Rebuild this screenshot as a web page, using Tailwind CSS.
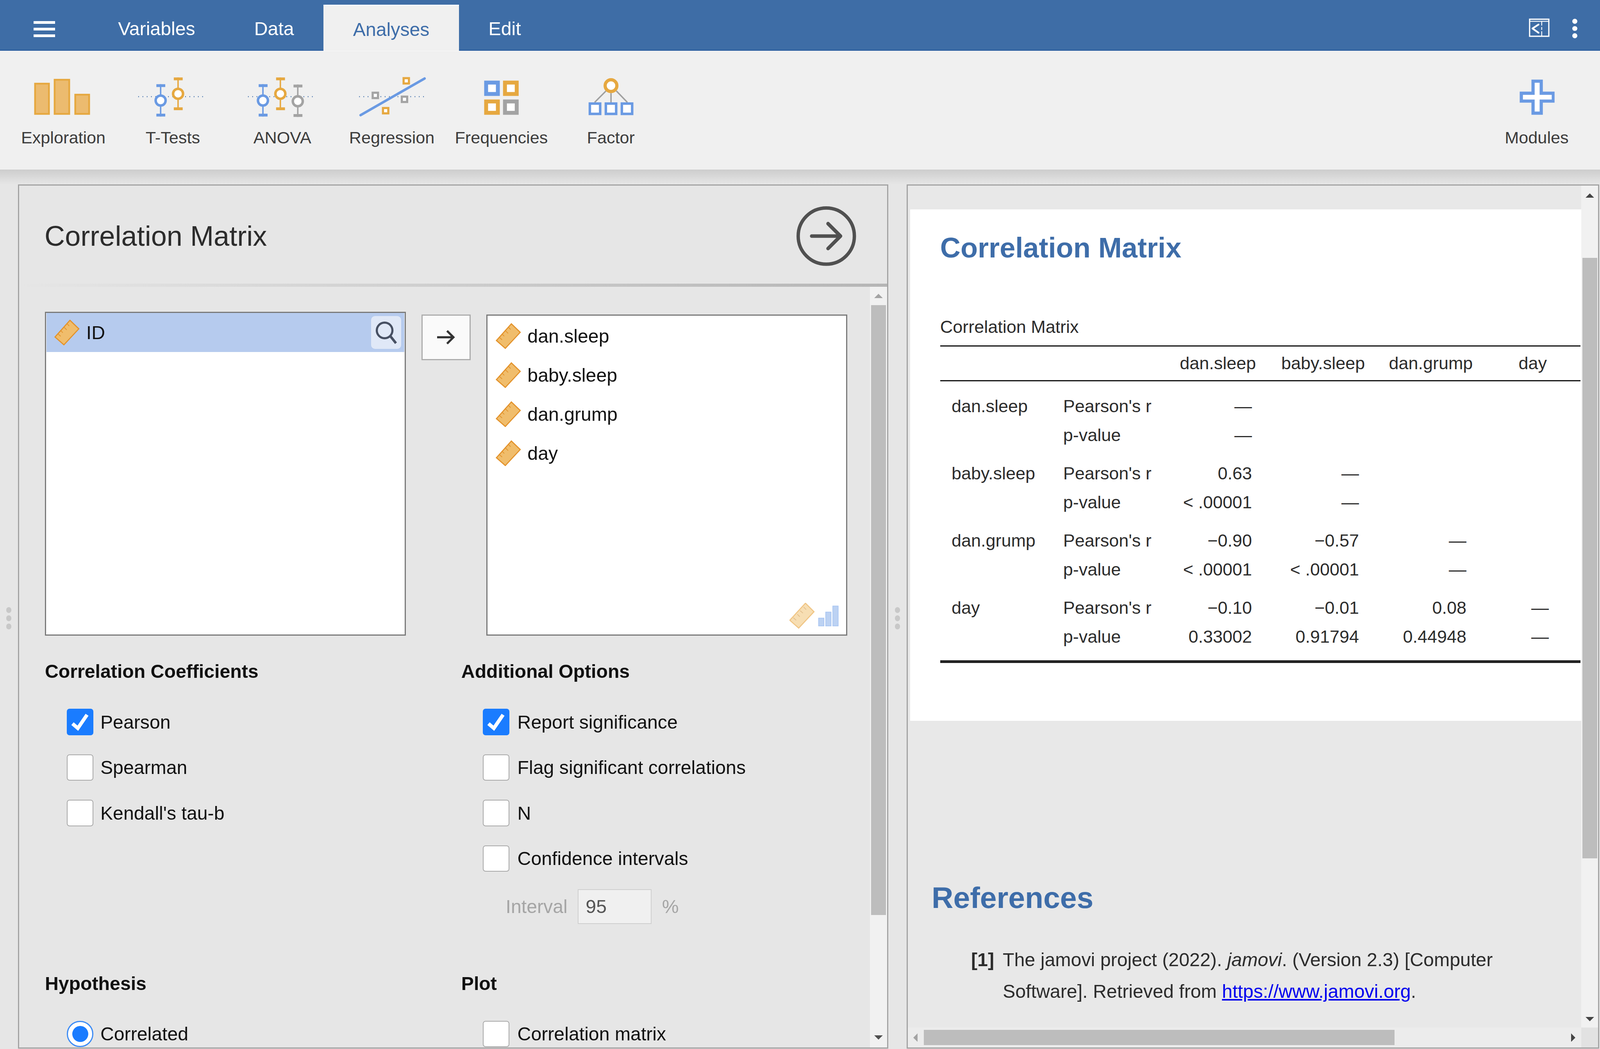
<!DOCTYPE html>
<html lang="en" class="text-[0.22222vw]">
<head>
    <meta charset="UTF-8">
    <title>jamovi - Correlation Matrix</title>
    <script src="https://cdn.jsdelivr.net/npm/@tailwindcss/browser@4"></script>
</head>
<!-- 1rem is 10px at a 4500px wide window: widths and fonts are in rem, heights in px -->
<body class="w-screen h-[2685px] overflow-hidden flex flex-col bg-[#e6e6e6] font-['Liberation_Sans',Arial,sans-serif] text-[5.3rem] text-[#111]">

    <!-- top bar -->
    <header class="h-[130px] shrink-0 flex items-center bg-[#3e6da6] border-b-[3px] border-[#2f60a0] text-white text-[5.3rem]">
        <div class="ml-[9.4rem] mt-[21px] w-[6.1rem] flex flex-col gap-[10px]">
            <div class="h-[7px] bg-white"></div>
            <div class="h-[7px] bg-white"></div>
            <div class="h-[7px] bg-white"></div>
        </div>
        <nav class="ml-[9.4rem] self-stretch flex pt-[12px]">
            <div class="px-[8.3rem] flex items-center pt-[8px]">Variables</div>
            <div class="px-[8.3rem] flex items-center pt-[8px]">Data</div>
            <div class="px-[8.3rem] flex items-center pt-[5px] -mb-[3px] bg-[#f0f0f0] border-t-[3px] border-white text-[#3e6da9]">Analyses</div>
            <div class="px-[8.3rem] flex items-center pt-[8px]">Edit</div>
        </nav>
        <svg class="ml-auto mt-[15px] w-[5.8rem] h-[52px]" viewBox="0 0 58 52" fill="none" stroke="white">
            <rect x="2" y="2" width="54" height="48" stroke-width="3.5"/>
            <path d="M3 8H55" stroke-width="2.5"/>
            <path d="M27 17L10 28L27 40" stroke-width="5" stroke-linecap="round" stroke-linejoin="round"/>
            <path d="M36 8V20M36 24V32M36 36V50" stroke-width="2.5"/>
        </svg>
        <div class="ml-[6.4rem] mr-[6.4rem] mt-[19px] flex flex-col gap-[6px]">
            <div class="w-[1.4rem] h-[1.4rem] rounded-full bg-white"></div>
            <div class="w-[1.4rem] h-[1.4rem] rounded-full bg-white"></div>
            <div class="w-[1.4rem] h-[1.4rem] rounded-full bg-white"></div>
        </div>
    </header>

    <!-- ribbon -->
    <section class="h-[304px] shrink-0 flex px-[2.4rem] pt-[55px] bg-[#f0f0f0] border-t border-[#fafafa] text-[4.75rem] text-[#3c3c3c]">
        <div class="w-[30.8rem] flex flex-col items-center">
            <svg class="w-[30.8rem] h-[130px]" viewBox="24 185 308 130" fill="#ecbb6f" stroke="#e6a840" stroke-width="5">
                <rect x="98.5" y="209.5" width="39" height="85"/>
                <rect x="153.5" y="198.5" width="41" height="96"/>
                <rect x="211.5" y="240.5" width="39" height="54"/>
            </svg>
            <span class="mt-[8px] leading-[56px]">Exploration</span>
        </div>
        <div class="w-[30.8rem] flex flex-col items-center">
            <svg class="w-[30.8rem] h-[130px]" viewBox="332 185 308 130" fill="none">
                <path d="M389 246H574" stroke="#3e6da9" stroke-width="3" stroke-dasharray="2 10"/>
                <path d="M452 211V302" stroke="#6a9ae3" stroke-width="4"/>
                <path d="M440 215H465M440 298H465" stroke="#6a9ae3" stroke-width="8"/>
                <circle cx="452" cy="257" r="14" fill="white" stroke="#6a9ae3" stroke-width="7"/>
                <path d="M501 192V284" stroke="#e6a840" stroke-width="4"/>
                <path d="M489 196H514M489 280H514" stroke="#e6a840" stroke-width="8"/>
                <circle cx="501" cy="238" r="14" fill="white" stroke="#e6a840" stroke-width="7"/>
            </svg>
            <span class="mt-[8px] leading-[56px]">T-Tests</span>
        </div>
        <div class="w-[30.8rem] flex flex-col items-center">
            <svg class="w-[30.8rem] h-[130px]" viewBox="640 185 308 130" fill="none">
                <path d="M697 246H882" stroke="#3e6da9" stroke-width="3" stroke-dasharray="2 10"/>
                <path d="M739 211V302" stroke="#6a9ae3" stroke-width="4"/>
                <path d="M727 215H752M727 298H752" stroke="#6a9ae3" stroke-width="8"/>
                <circle cx="739" cy="257" r="14" fill="white" stroke="#6a9ae3" stroke-width="7"/>
                <path d="M788 192V284" stroke="#e6a840" stroke-width="4"/>
                <path d="M776 196H801M776 280H801" stroke="#e6a840" stroke-width="8"/>
                <circle cx="788" cy="238" r="14" fill="white" stroke="#e6a840" stroke-width="7"/>
                <path d="M837 212V303" stroke="#a3a3a3" stroke-width="4"/>
                <path d="M825 216H850M825 299H850" stroke="#a3a3a3" stroke-width="8"/>
                <circle cx="837" cy="259" r="14" fill="white" stroke="#a3a3a3" stroke-width="7"/>
            </svg>
            <span class="mt-[8px] leading-[56px]">ANOVA</span>
        </div>
        <div class="w-[30.8rem] flex flex-col items-center">
            <svg class="w-[30.8rem] h-[130px]" viewBox="948 185 308 130" fill="none">
                <path d="M1010 246H1196" stroke="#3e6da9" stroke-width="3" stroke-dasharray="2 10"/>
                <path d="M1014 298L1194 195" stroke="#6a9ae3" stroke-width="7" stroke-linecap="round"/>
                <rect x="1048" y="235" width="15" height="15" fill="white" stroke="#a3a3a3" stroke-width="6"/>
                <rect x="1130" y="246" width="15" height="15" fill="white" stroke="#a3a3a3" stroke-width="6"/>
                <rect x="1135" y="194" width="15" height="15" fill="white" stroke="#e6a840" stroke-width="6"/>
                <rect x="1077" y="278" width="15" height="15" fill="white" stroke="#e6a840" stroke-width="6"/>
            </svg>
            <span class="mt-[8px] leading-[56px]">Regression</span>
        </div>
        <div class="w-[30.8rem] flex flex-col items-center">
            <svg class="w-[30.8rem] h-[130px]" viewBox="1256 185 308 130" fill="white" stroke-width="11">
                <rect x="1367.5" y="206.5" width="33" height="32" stroke="#6a9ae3"/>
                <rect x="1420.5" y="206.5" width="33" height="32" stroke="#e6a840"/>
                <rect x="1367.5" y="259.5" width="33" height="32" stroke="#e6a840"/>
                <rect x="1420.5" y="259.5" width="33" height="32" stroke="#a3a3a3"/>
            </svg>
            <span class="mt-[8px] leading-[56px]">Frequencies</span>
        </div>
        <div class="w-[30.8rem] flex flex-col items-center">
            <svg class="w-[30.8rem] h-[130px]" viewBox="1564 185 308 130" fill="none">
                <path d="M1718 236V262M1704 230L1672 262M1733 230L1764 262" stroke="#a0a0a0" stroke-width="4"/>
                <circle cx="1718" cy="215" r="16.5" fill="white" stroke="#e6a840" stroke-width="9"/>
                <rect x="1658.5" y="265.5" width="29" height="29" fill="white" stroke="#6a9ae3" stroke-width="7"/>
                <rect x="1703.5" y="265.5" width="29" height="29" fill="white" stroke="#6a9ae3" stroke-width="7"/>
                <rect x="1748.5" y="265.5" width="29" height="29" fill="white" stroke="#6a9ae3" stroke-width="7"/>
            </svg>
            <span class="mt-[8px] leading-[56px]">Factor</span>
        </div>
        <div class="ml-auto w-[30.8rem] flex flex-col items-center">
            <svg class="w-[30.8rem] h-[130px]" viewBox="4168 185 308 130">
                <path d="M4307 198H4339V232H4372V263H4339V297H4307V263H4274V232H4307Z" fill="#6a9ae3"/>
                <path d="M4316 207H4330V241H4364V254H4330V288H4316V254H4283V241H4316Z" fill="white"/>
            </svg>
            <span class="mt-[8px] leading-[56px]">Modules</span>
        </div>
    </section>
    <div class="h-[38px] shrink-0 bg-linear-to-b from-[#cdcdcd] to-[#e6e6e6]"></div>

    <!-- main area -->
    <main class="flex-1 min-h-0 flex pb-[1px]">
        <div class="w-[5rem] shrink-0 flex flex-col items-center justify-center gap-[6px] pt-[8px]">
            <div class="w-[1.4rem] h-[15px] rounded-full bg-[#c8c8c8]"></div>
            <div class="w-[1.4rem] h-[15px] rounded-full bg-[#c8c8c8]"></div>
            <div class="w-[1.4rem] h-[15px] rounded-full bg-[#c8c8c8]"></div>
        </div>

        <!-- options panel -->
        <section class="w-[244.8rem] shrink-0 flex flex-col border-[3px] border-[#a3a3a3] overflow-hidden">
            <div class="h-[251px] shrink-0 flex items-center justify-between pl-[7.2rem] pr-[8.5rem] pt-[8px]">
                <h1 class="text-[7.93rem] text-[#2c2c2c]">Correlation Matrix</h1>
                <svg class="w-[17.2rem] h-[17.2rem]" viewBox="0 0 172 172" fill="none" stroke="#505050">
                    <circle cx="86" cy="86" r="79" stroke-width="9.5"/>
                    <path d="M45 86H126M91 51L126 86L91 121" stroke-width="10" stroke-linecap="round" stroke-linejoin="round"/>
                </svg>
            </div>
            <div class="h-[8px] shrink-0 bg-linear-to-r from-[#e6e6e6] to-[#b5b5b5]"></div>

            <div class="flex-1 min-h-0 flex">
                <div class="flex-1 min-w-0 pl-[7.3rem] pt-[64px] overflow-hidden">
                    <div class="flex items-start">
                        <div class="w-[101.5rem] h-[829px] border-[3px] border-[#7a7a7a] bg-white">
                            <div class="h-[100px] mx-[1px] flex items-center pl-[2.2rem] pr-[0.9rem] bg-[#b6cbee]">
                                <svg class="w-[7.1rem] h-[7.3rem]" viewBox="0 0 71 73" fill="#f0bd6c" stroke="#e3922a" stroke-width="3">
                                    <path d="M44 2L69 26L27 71L2 49Z"/>
                                    <path d="M10 40L18 47M18 31L24 37M27 21L35 29M36 12L42 18" fill="none" stroke-width="2"/>
                                </svg>
                                <span class="ml-[1.9rem]">ID</span>
                                <div class="ml-auto w-[8.4rem] h-[84px] rounded-[10px] bg-[#e0e8f7] flex items-center justify-center">
                                    <svg class="w-[8.4rem] h-[8.4rem]" viewBox="0 0 84 84" fill="none" stroke="#475063">
                                        <circle cx="38" cy="36" r="22" stroke-width="6"/>
                                        <path d="M54 52L70 72" stroke-width="7"/>
                                    </svg>
                                </div>
                            </div>
                        </div>
                        <button class="ml-[4.4rem] mt-[7px] w-[13.9rem] h-[117px] bg-[#fafafa] border-[3px] border-[#adadad] flex items-center justify-center">
                            <svg class="w-[5rem] h-[4rem]" viewBox="0 0 50 40" fill="none" stroke="#333" stroke-width="6">
                                <path d="M0 20H46M28 2L46 20L28 38"/>
                            </svg>
                        </button>
                        <div class="relative ml-[4.4rem] mt-[7px] w-[101.5rem] h-[822px] border-[3px] border-[#7a7a7a] bg-white pt-[2px] pl-[2.3rem]">
                            <div class="h-[100px] flex items-center">
                                <svg class="w-[7.1rem] h-[7.3rem]" viewBox="0 0 71 73" fill="#f0bd6c" stroke="#e3922a" stroke-width="3">
                                    <path d="M44 2L69 26L27 71L2 49Z"/>
                                    <path d="M10 40L18 47M18 31L24 37M27 21L35 29M36 12L42 18" fill="none" stroke-width="2"/>
                                </svg>
                                <span class="ml-[1.8rem]">dan.sleep</span>
                            </div>
                            <div class="h-[100px] flex items-center">
                                <svg class="w-[7.1rem] h-[7.3rem]" viewBox="0 0 71 73" fill="#f0bd6c" stroke="#e3922a" stroke-width="3">
                                    <path d="M44 2L69 26L27 71L2 49Z"/>
                                    <path d="M10 40L18 47M18 31L24 37M27 21L35 29M36 12L42 18" fill="none" stroke-width="2"/>
                                </svg>
                                <span class="ml-[1.8rem]">baby.sleep</span>
                            </div>
                            <div class="h-[100px] flex items-center">
                                <svg class="w-[7.1rem] h-[7.3rem]" viewBox="0 0 71 73" fill="#f0bd6c" stroke="#e3922a" stroke-width="3">
                                    <path d="M44 2L69 26L27 71L2 49Z"/>
                                    <path d="M10 40L18 47M18 31L24 37M27 21L35 29M36 12L42 18" fill="none" stroke-width="2"/>
                                </svg>
                                <span class="ml-[1.8rem]">dan.grump</span>
                            </div>
                            <div class="h-[100px] flex items-center">
                                <svg class="w-[7.1rem] h-[7.3rem]" viewBox="0 0 71 73" fill="#f0bd6c" stroke="#e3922a" stroke-width="3">
                                    <path d="M44 2L69 26L27 71L2 49Z"/>
                                    <path d="M10 40L18 47M18 31L24 37M27 21L35 29M36 12L42 18" fill="none" stroke-width="2"/>
                                </svg>
                                <span class="ml-[1.8rem]">day</span>
                            </div>
                            <svg class="absolute right-[2rem] bottom-[14px] w-[14rem] h-[7.4rem]" viewBox="2221 1537 140 74">
                                <g fill="#f7deb3" stroke="#f0c585" stroke-width="3">
                                    <path d="M2266 1538L2290 1562L2247 1608L2222 1586Z"/>
                                    <path d="M2232 1579L2240 1586M2243 1569L2250 1576M2251 1559L2259 1566M2261 1549L2268 1556" fill="none" stroke="#e2bd8a" stroke-width="2"/>
                                </g>
                                <g fill="#bcd2f3" stroke="#a9c6f3" stroke-width="2">
                                    <rect x="2303" y="1580" width="15" height="22"/>
                                    <rect x="2323" y="1563" width="15" height="39"/>
                                    <rect x="2343" y="1546" width="15" height="56"/>
                                </g>
                            </svg>
                        </div>
                    </div>

                    <div class="mt-[61px] grid grid-cols-[117.1rem_1fr] gap-y-[122px]">
                        <div>
                            <h2 class="h-[60px] leading-[60px] text-[5.3rem] font-bold">Correlation Coefficients</h2>
                            <div class="mt-[63px] ml-[6.2rem] flex flex-col gap-[42.5px]">
                                <label class="h-[74px] flex items-center gap-[2rem]">
                                    <span class="w-[7.4rem] h-[7.4rem] rounded-[7px] bg-[#1a7cff]">
                                        <svg class="w-full h-full" viewBox="0 0 74 74" fill="none" stroke="white" stroke-width="10"><path d="M16 42L31 55L57 17"/></svg>
                                    </span>
                                    Pearson
                                </label>
                                <label class="h-[74px] flex items-center gap-[2rem]">
                                    <span class="w-[7.4rem] h-[7.4rem] rounded-[7px] bg-white border-[2px] border-[#a8a8a8]"></span>
                                    Spearman
                                </label>
                                <label class="h-[74px] flex items-center gap-[2rem]">
                                    <span class="w-[7.4rem] h-[7.4rem] rounded-[7px] bg-white border-[2px] border-[#a8a8a8]"></span>
                                    Kendall's tau-b
                                </label>
                            </div>
                        </div>
                        <div>
                            <h2 class="h-[60px] leading-[60px] text-[5.3rem] font-bold">Additional Options</h2>
                            <div class="mt-[63px] ml-[6.1rem] flex flex-col gap-[42.5px]">
                                <label class="h-[74px] flex items-center gap-[2.3rem]">
                                    <span class="w-[7.4rem] h-[7.4rem] rounded-[7px] bg-[#1a7cff]">
                                        <svg class="w-full h-full" viewBox="0 0 74 74" fill="none" stroke="white" stroke-width="10"><path d="M16 42L31 55L57 17"/></svg>
                                    </span>
                                    Report significance
                                </label>
                                <label class="h-[74px] flex items-center gap-[2.3rem]">
                                    <span class="w-[7.4rem] h-[7.4rem] rounded-[7px] bg-white border-[2px] border-[#a8a8a8]"></span>
                                    Flag significant correlations
                                </label>
                                <label class="h-[74px] flex items-center gap-[2.3rem]">
                                    <span class="w-[7.4rem] h-[7.4rem] rounded-[7px] bg-white border-[2px] border-[#a8a8a8]"></span>
                                    N
                                </label>
                                <label class="h-[74px] flex items-center gap-[2.3rem]">
                                    <span class="w-[7.4rem] h-[7.4rem] rounded-[7px] bg-white border-[2px] border-[#a8a8a8]"></span>
                                    Confidence intervals
                                </label>
                            </div>
                            <div class="mt-[41px] ml-[12.5rem] h-[89px] flex items-center text-[#a5a5a5]">
                                <span>Interval</span>
                                <span class="ml-[2.9rem] w-[20.7rem] h-[89px] flex items-center pl-[2rem] bg-[#f0f0f0] border-[2px] border-[#cfcfcf] text-[#555]">95</span>
                                <span class="ml-[3rem]">%</span>
                            </div>
                        </div>
                        <div>
                            <h2 class="h-[60px] leading-[60px] text-[5.3rem] font-bold">Hypothesis</h2>
                            <label class="mt-[63px] ml-[6.2rem] h-[74px] flex items-center gap-[2rem]">
                                <span class="w-[7.4rem] h-[7.4rem] rounded-full bg-white border-[3px] border-[#3b8bf5] flex items-center justify-center">
                                    <span class="w-[4.5rem] h-[4.5rem] rounded-full bg-[#1a7cff]"></span>
                                </span>
                                Correlated
                            </label>
                        </div>
                        <div>
                            <h2 class="h-[60px] leading-[60px] text-[5.3rem] font-bold">Plot</h2>
                            <label class="mt-[63px] ml-[6.1rem] h-[74px] flex items-center gap-[2.3rem]">
                                <span class="w-[7.4rem] h-[7.4rem] rounded-[7px] bg-white border-[2px] border-[#a8a8a8]"></span>
                                Correlation matrix
                            </label>
                        </div>
                    </div>
                </div>

                <!-- options scrollbar -->
                <div class="w-[4.8rem] shrink-0 flex flex-col items-center bg-[#f1f1f1]">
                    <div class="h-[47px] shrink-0 flex items-center">
                        <svg class="w-[2.4rem] h-[1.2rem]" viewBox="0 0 24 12"><path d="M12 0L24 12H0Z" fill="#a3a3a3"/></svg>
                    </div>
                    <div class="w-[4.1rem] h-[1561px] shrink-0 bg-[#bdbdbd]"></div>
                    <div class="flex-1 flex items-end pb-[20px]">
                        <svg class="w-[2.4rem] h-[1.2rem]" viewBox="0 0 24 12"><path d="M0 0H24L12 12Z" fill="#505050"/></svg>
                    </div>
                </div>
            </div>
        </section>

        <div class="w-[5.2rem] shrink-0 flex flex-col items-center justify-center gap-[6px] pt-[8px]">
            <div class="w-[1.4rem] h-[15px] rounded-full bg-[#c8c8c8]"></div>
            <div class="w-[1.4rem] h-[15px] rounded-full bg-[#c8c8c8]"></div>
            <div class="w-[1.4rem] h-[15px] rounded-full bg-[#c8c8c8]"></div>
        </div>

        <!-- results panel -->
        <section class="w-[194.8rem] shrink-0 flex flex-col border-[3px] border-[#a3a3a3] overflow-hidden bg-[#e8e8e8] text-[#2c2c2c]">
            <div class="flex-1 min-h-0 flex">
                <div class="flex-1 min-w-0 pt-[61px] overflow-hidden">
                    <article class="ml-[0.7rem] w-[188.8rem] h-[1309px] bg-white pl-[8.4rem] pt-[50px] text-[4.94rem]">
                        <h2 class="h-[96px] leading-[96px] text-[7.93rem] font-bold text-[#3e6da9]">Correlation Matrix</h2>
                        <div class="mt-[125px] h-[60px] leading-[60px]">Correlation Matrix</div>
                        <div class="mt-[17px] w-[180.1rem] border-t-[3px] border-[#111]">
                            <div class="h-[86px] grid grid-cols-[63.6rem_29rem_30.2rem_30.4rem_26.9rem] items-center text-center">
                                <span></span><span>dan.sleep</span><span>baby.sleep</span><span>dan.grump</span><span>day</span>
                            </div>
                            <div class="border-t-[3px] border-[#111] pt-[26px] flex flex-col gap-[23px]">
                                <div>
                                    <div class="h-[74.5px] grid grid-cols-[34.6rem_29rem_24.1rem_30.1rem_30.2rem_23.2rem] items-center text-right">
                                        <span class="text-left pl-[3.2rem]">dan.sleep</span><span class="text-left">Pearson's r</span><span>—</span>
                                    </div>
                                    <div class="h-[74.5px] grid grid-cols-[34.6rem_29rem_24.1rem_30.1rem_30.2rem_23.2rem] items-center text-right">
                                        <span></span><span class="text-left">p-value</span><span>—</span>
                                    </div>
                                </div>
                                <div>
                                    <div class="h-[74.5px] grid grid-cols-[34.6rem_29rem_24.1rem_30.1rem_30.2rem_23.2rem] items-center text-right">
                                        <span class="text-left pl-[3.2rem]">baby.sleep</span><span class="text-left">Pearson's r</span><span>0.63</span><span>—</span>
                                    </div>
                                    <div class="h-[74.5px] grid grid-cols-[34.6rem_29rem_24.1rem_30.1rem_30.2rem_23.2rem] items-center text-right">
                                        <span></span><span class="text-left">p-value</span><span>&lt; .00001</span><span>—</span>
                                    </div>
                                </div>
                                <div>
                                    <div class="h-[74.5px] grid grid-cols-[34.6rem_29rem_24.1rem_30.1rem_30.2rem_23.2rem] items-center text-right">
                                        <span class="text-left pl-[3.2rem]">dan.grump</span><span class="text-left">Pearson's r</span><span>−0.90</span><span>−0.57</span><span>—</span>
                                    </div>
                                    <div class="h-[74.5px] grid grid-cols-[34.6rem_29rem_24.1rem_30.1rem_30.2rem_23.2rem] items-center text-right">
                                        <span></span><span class="text-left">p-value</span><span>&lt; .00001</span><span>&lt; .00001</span><span>—</span>
                                    </div>
                                </div>
                                <div>
                                    <div class="h-[74.5px] grid grid-cols-[34.6rem_29rem_24.1rem_30.1rem_30.2rem_23.2rem] items-center text-right">
                                        <span class="text-left pl-[3.2rem]">day</span><span class="text-left">Pearson's r</span><span>−0.10</span><span>−0.01</span><span>0.08</span><span>—</span>
                                    </div>
                                    <div class="h-[74.5px] grid grid-cols-[34.6rem_29rem_24.1rem_30.1rem_30.2rem_23.2rem] items-center text-right">
                                        <span></span><span class="text-left">p-value</span><span>0.33002</span><span>0.91794</span><span>0.44948</span><span>—</span>
                                    </div>
                                </div>
                            </div>
                            <div class="mt-[23px] h-[7px] bg-[#222]"></div>
                        </div>
                    </article>
                    <h2 class="mt-[402px] ml-[6.7rem] h-[100px] leading-[100px] text-[8.44rem] font-bold text-[#3e6da9]">References</h2>
                    <div class="mt-[69px] ml-[17.8rem] flex gap-[2.4rem] leading-[81px] text-[5.31rem]">
                        <b>[1]</b>
                        <div>
                            <p>The jamovi project (2022). <i>jamovi</i>. (Version 2.3) [Computer</p>
                            <p>Software]. Retrieved from <a class="text-[#0000ee] underline" href="#">https://www.jamovi.org</a>.</p>
                        </div>
                    </div>
                </div>

                <!-- results vertical scrollbar -->
                <div class="w-[4.7rem] shrink-0 flex flex-col items-center bg-[#f1f1f1]">
                    <div class="h-[185px] shrink-0 pt-[20px]">
                        <svg class="w-[2.4rem] h-[1.2rem]" viewBox="0 0 24 12"><path d="M12 0L24 12H0Z" fill="#444"/></svg>
                    </div>
                    <div class="w-[4.2rem] h-[1537px] shrink-0 bg-[#bdbdbd]"></div>
                    <div class="flex-1 flex items-end pb-[16px]">
                        <svg class="w-[2.4rem] h-[1.2rem]" viewBox="0 0 24 12"><path d="M0 0H24L12 12Z" fill="#444"/></svg>
                    </div>
                </div>
            </div>

            <!-- results horizontal scrollbar -->
            <div class="h-[51px] shrink-0 flex items-center bg-[#ececec]">
                <svg class="ml-[1.5rem] w-[1.2rem] h-[2.4rem]" viewBox="0 0 12 24"><path d="M12 0V24L0 12Z" fill="#a3a3a3"/></svg>
                <div class="ml-[1.8rem] w-[132.4rem] h-[39px] bg-[#bdbdbd]"></div>
                <svg class="ml-[49.7rem] w-[1.2rem] h-[2.4rem]" viewBox="0 0 12 24"><path d="M0 0V24L12 12Z" fill="#444"/></svg>
                <div class="ml-auto w-[4.7rem] h-[51px] bg-[#e2e2e2]"></div>
            </div>
        </section>
    </main>
</body>
</html>
